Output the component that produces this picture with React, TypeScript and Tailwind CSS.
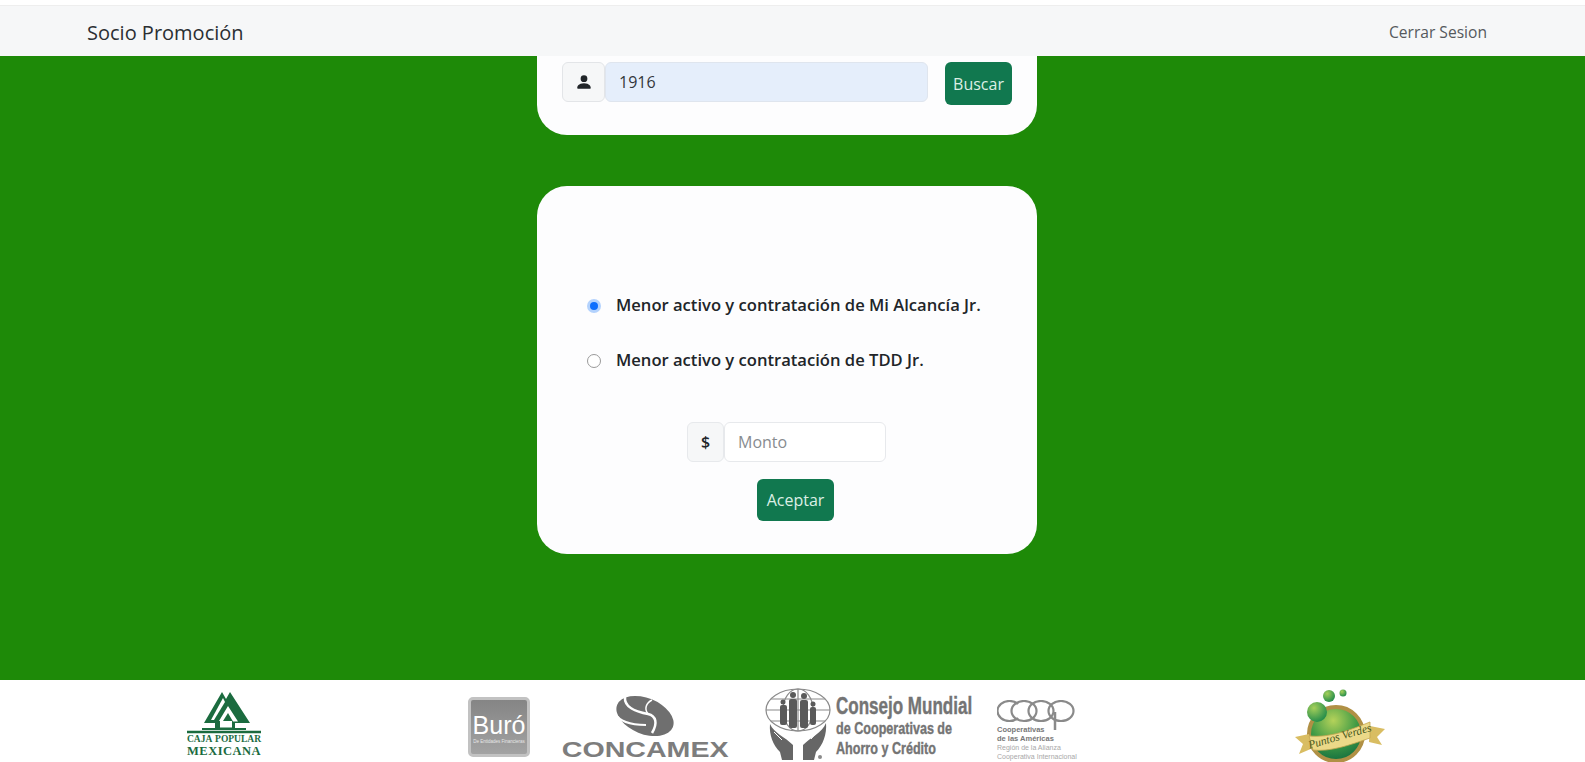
function PersonIcon() {
  return (
    <svg width="18" height="18" viewBox="0 0 16 16" fill="#212529" className="block">
      <path d="M3 14s-1 0-1-1 1-4 6-4 6 3 6 4-1 1-1 1H3Zm5-6a3 3 0 1 0 0-6 3 3 0 0 0 0 6Z" />
    </svg>
  );
}

function CajaLogo() {
  return (
    <div className="w-[74px] flex flex-col items-center text-[#1b6b3f] font-['Liberation_Serif',serif] font-bold">
      <svg width="74" height="42" viewBox="0 0 74 42" className="block">
        <path d="M35 0L39 7L43 0L63 31H48V36H59V38H15V36H28V31H17Z" fill="#1b6b3f" />
        <path d="M36 6L24 28H27L38 10Z" fill="#ffffff" />
        <path d="M41 14L32 29H36L41 21L46 29.500H51Z" fill="#ffffff" />
        <path d="M33 29H45V35.500H33Z" fill="#ffffff" />
        <path d="M0 40H74" stroke="#1b6b3f" strokeWidth="2.5" />
      </svg>
      <div className="w-full flex justify-between text-[9.500px] leading-[11px] whitespace-nowrap">
        <span>CAJA</span><span>POPULAR</span>
      </div>
      <div className="w-full text-center text-[12.500px] leading-[12px] tracking-[0.5px] whitespace-nowrap">MEXICANA</div>
    </div>
  );
}

function BuroLogo() {
  return (
    <div className="w-[62px] h-[60px] rounded-[5px] border-[3px] border-[#c2c2c2] bg-linear-to-b from-[#858585] to-[#a3a3a3] flex flex-col items-center text-white font-['Liberation_Sans',sans-serif]">
      <div className="text-[25px] leading-[28px] mt-[11px]">Buró</div>
      <div className="text-[4.5px] leading-[6px] text-[#e8e8e8] whitespace-nowrap">De Entidades Financieras</div>
    </div>
  );
}

function ConcamexLogo() {
  return (
    <div className="w-[166px] flex flex-col items-center">
      <svg width="62" height="44" viewBox="0 0 62 44" className="block">
        <ellipse cx="31" cy="21" rx="30" ry="18" transform="rotate(22 31 21)" fill="#6f6f6f" />
        <path d="M11 2C10 12 22 17 34 19C42 21 44 28 38 38" stroke="#ffffff" strokeWidth="2.5" fill="none" />
        <path d="M1 18C6 28 20 30 32 30" stroke="#ffffff" strokeWidth="2" fill="none" />
        <path d="M34 19C30 14 32 8 38 5" stroke="#ffffff" strokeWidth="1.5" fill="none" />
      </svg>
      <div className="mt-[2px] text-[22px] leading-[18px] font-bold text-[#7d7d7d] font-['Liberation_Sans',sans-serif] whitespace-nowrap scale-x-[1.3]">CONCAMEX</div>
    </div>
  );
}

function ConsejoLogo() {
  return (
    <div className="w-[207px] flex items-start">
      <svg width="66" height="75" viewBox="0 0 66 75" className="block shrink-0">
        <g fill="none" stroke="#8a8a8a" strokeWidth="1.2">
          <ellipse cx="33" cy="23" rx="32" ry="21" />
          <ellipse cx="33" cy="23" rx="15" ry="21" />
          <path d="M1 23H65M6 12H60M6 34H60M33 2V44" />
        </g>
        <g fill="#5a5a5a">
          <circle cx="18" cy="15" r="2.5" /><rect x="15" y="18" width="7" height="20" rx="2" />
          <circle cx="28" cy="8" r="3" /><rect x="24" y="12" width="8" height="29" rx="2" />
          <circle cx="39" cy="9" r="3" /><rect x="35" y="13" width="8" height="28" rx="2" />
          <circle cx="48" cy="17" r="2.5" /><rect x="45" y="20" width="6" height="18" rx="2" />
        </g>
        <path d="M5 37C9 46 20 50 28 58V73H17L15 65C8 58 4 48 5 37Z" fill="#666666" />
        <path d="M61 36C57 46 46 50 38 58V73H49L51 65C58 58 62 47 61 36Z" fill="#666666" />
        <path d="M9 45L17 53M53 44L46 52" stroke="#ffffff" strokeWidth="1" />
        <circle cx="55" cy="70" r="2" fill="#8a8a8a" />
      </svg>
      <div className="ml-[5px] mt-[7px] text-[#747474] font-bold font-['Liberation_Sans',sans-serif] whitespace-nowrap [-webkit-text-stroke:0.4px_#747474]">
        <div className="text-[23px] leading-[24px] origin-left scale-x-[0.74]">Consejo Mundial</div>
        <div className="text-[17px] leading-[21px] origin-left scale-x-[0.74]">de Cooperativas de</div>
        <div className="text-[17px] leading-[20px] origin-left scale-x-[0.74]">Ahorro y Crédito</div>
      </div>
    </div>
  );
}

function CoopLogo() {
  return (
    <div className="w-[78px]">
      <svg width="78" height="30" viewBox="0 0 78 30" className="block">
        <g fill="none" stroke="#8a8a8a" strokeWidth="2.2">
          <path d="M21 4A12 10 0 1 0 21 18" />
          <ellipse cx="27" cy="11" rx="12.5" ry="10" />
          <ellipse cx="44" cy="11" rx="12.5" ry="10" />
          <ellipse cx="64" cy="11" rx="12.5" ry="10" />
          <path d="M58 12V30" strokeWidth="2.5" />
        </g>
      </svg>
      <div className="-mt-[5px] text-[#777777] font-['Liberation_Sans',sans-serif] whitespace-nowrap">
        <div className="text-[7.5px] leading-[9px] font-bold">Cooperativas</div>
        <div className="text-[7.5px] leading-[9px] font-bold">de las Américas</div>
        <div className="text-[7px] leading-[9px] text-[#a8a8a8]">Región de la Alianza</div>
        <div className="text-[7px] leading-[9px] text-[#a8a8a8]">Cooperativa Internacional</div>
      </div>
    </div>
  );
}

function PuntosLogo() {
  return (
    <svg width="110" height="80" viewBox="0 0 110 80" className="block">
      <defs>
        <radialGradient id="ball" cx="45%" cy="25%" r="80%">
          <stop offset="0%" stopColor="#b4d25a" />
          <stop offset="55%" stopColor="#3f9a45" />
          <stop offset="100%" stopColor="#0f6a3f" />
        </radialGradient>
        <radialGradient id="bubble" cx="35%" cy="30%" r="75%">
          <stop offset="0%" stopColor="#a5cf5a" />
          <stop offset="100%" stopColor="#1f8a4a" />
        </radialGradient>
      </defs>
      <circle cx="51" cy="52" r="27" fill="url(#ball)" stroke="#b09045" strokeWidth="4" />
      <circle cx="32" cy="30" r="10" fill="url(#bubble)" />
      <circle cx="44" cy="14" r="6" fill="url(#bubble)" />
      <circle cx="58" cy="11" r="3.5" fill="url(#bubble)" />
      <path d="M10 55L24 52L28 66L14 72L18 62Z" fill="#d9bd62" />
      <path d="M85 44L100 47L92 55L97 63L84 60Z" fill="#d9bd62" />
      <path d="M24 54C45 56 65 48 85 40L85 56C65 63 45 70 28 68Z" fill="#ecd988" stroke="#c4a64f" strokeWidth="0.8" />
      <text x="55" y="58" textAnchor="middle" transform="rotate(-16 55 55)" fontSize="11.5" fontStyle="italic" fontFamily="Liberation Serif, serif" fill="#4a5a20">Puntos Verdes</text>
    </svg>
  );
}

export default function App() {
  return (
    <div className="h-[762px] overflow-hidden flex flex-col bg-white font-['Open_Sans',sans-serif] text-[#212529]">
      <div className="h-[6px] bg-white border-b border-[#eeeeee]" />

      <nav className="h-[50px] bg-[#f6f7f8] relative z-10 flex items-center justify-between pl-[87px] pr-[98px] pt-[3px]">
        <span className="text-[20px] text-[#2b2f33]">Socio Promoción</span>
        <span className="text-[15.6px] text-[#55595d] mt-[1px]">Cerrar Sesion</span>
      </nav>

      <main className="h-[624px] bg-[#1e8a08] flex flex-col items-center overflow-hidden pr-[11px]">
        <section className="w-[500px] h-[109px] -mt-[30px] shrink-0 rounded-[30px] bg-[#fdfdfe] px-[25px] pt-[36px] flex items-start">
          <div className="flex items-stretch h-[40px]">
            <div className="w-[43px] flex items-center justify-center bg-[#f6f7f8] border border-[#e3e5e8] rounded-[6px]">
              <PersonIcon />
            </div>
            <input
              readOnly
              value="1916"
              className="w-[323px] bg-[#e5eefb] border border-[#dfe5ee] rounded-[6px] px-[13px] text-[16px] text-[#33373b] outline-none"
            />
          </div>
          <button className="ml-[17px] w-[68px] h-[43px] rounded-[6px] bg-[#11784f] text-[#dcefe5] text-[16px]">Buscar</button>
        </section>

        <section className="w-[500px] h-[368px] mt-[51px] shrink-0 rounded-[30px] bg-[#fdfdfe] pt-[110px]">
          <div className="pl-[50px] flex flex-col gap-[37px]">
            <label className="flex items-center h-[18px] font-semibold text-[16.6px]">
              <span className="w-[14px] h-[14px] mt-[2px] rounded-full bg-[#b3d2fd] flex items-center justify-center shrink-0">
                <span className="w-[8px] h-[8px] rounded-full bg-[#0d6efd]" />
              </span>
              <span className="ml-[15px] whitespace-nowrap">Menor activo y contratación de Mi Alcancía Jr.</span>
            </label>
            <label className="flex items-center h-[18px] font-semibold text-[16.6px]">
              <span className="w-[14px] h-[14px] mt-[2px] rounded-full border-[1.5px] border-[#9a9a9a] bg-white shrink-0" />
              <span className="ml-[15px] whitespace-nowrap">Menor activo y contratación de TDD Jr.</span>
            </label>
          </div>

          <div className="mt-[53px] ml-[150px] flex items-stretch h-[40px] w-[199px]">
            <div className="w-[37px] flex items-center justify-center bg-[#f6f7f8] border border-[#e7e9ec] rounded-[6px] font-semibold text-[16px]">$</div>
            <input
              readOnly
              placeholder="Monto"
              className="w-[162px] bg-white border border-[#e7e9ec] rounded-[6px] px-[13px] text-[16px] placeholder:text-[#888c90] outline-none"
            />
          </div>
          <button className="block ml-[220px] mt-[17px] w-[77px] h-[42px] rounded-[6px] bg-[#11784f] text-[#dcefe5] text-[16px]">Aceptar</button>
        </section>
      </main>

      <footer className="h-[82px] bg-white flex items-start pl-[187px] overflow-hidden">
        <div className="mt-[12px]"><CajaLogo /></div>
        <div className="mt-[17px] ml-[207px]"><BuroLogo /></div>
        <div className="mt-[15px] ml-[32px]"><ConcamexLogo /></div>
        <div className="mt-[7px] ml-[37px]"><ConsejoLogo /></div>
        <div className="mt-[20px] ml-[25px]"><CoopLogo /></div>
        <div className="mt-[2px] ml-[210px]"><PuntosLogo /></div>
      </footer>
    </div>
  );
}
